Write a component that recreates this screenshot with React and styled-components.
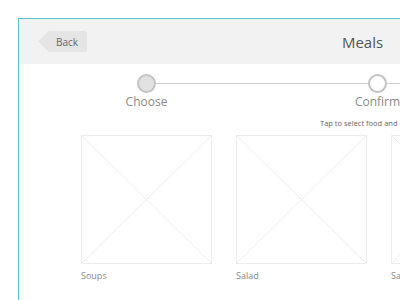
import styled, { createGlobalStyle } from "styled-components";

const GlobalStyle = createGlobalStyle`
  html, body {
    margin: 0;
    padding: 0;
    background: #fff;
    overflow: hidden;
  }
  body {
    font-family: "Open Sans", "Liberation Sans", sans-serif;
  }
`;

const steps = [
  { label: "Choose", done: true },
  { label: "Confirm", done: false },
  { label: "Pay", done: false },
];

const meals = ["Soups", "Salad", "Sandwiches"];

function Placeholder() {
  return (
    <Thumb>
      <svg width="100%" height="100%" viewBox="0 0 131 129" preserveAspectRatio="none">
        <line x1="0" y1="0" x2="131" y2="129" stroke="#ececec" strokeWidth="1" />
        <line x1="131" y1="0" x2="0" y2="129" stroke="#ececec" strokeWidth="1" />
      </svg>
    </Thumb>
  );
}

export default function App() {
  return (
    <>
      <GlobalStyle />
      <Frame>
        <Header>
          <BackButton>Back</BackButton>
          <Title>Meals</Title>
          <span />
        </Header>
        <Stepper>
          {steps.map((s, i) => (
            <Step key={s.label}>
              <Track>
                <Segment $hidden={i === 0} />
                <Dot $done={s.done} />
                <Segment $hidden={i === steps.length - 1} />
              </Track>
              <StepLabel>{s.label}</StepLabel>
            </Step>
          ))}
        </Stepper>
        <Hint>Tap to select food and drinks</Hint>
        <MealGrid>
          {meals.map((m) => (
            <MealCard key={m}>
              <Placeholder />
              <MealName>{m}</MealName>
            </MealCard>
          ))}
        </MealGrid>
      </Frame>
    </>
  );
}

const Frame = styled.div`
  margin: 18px 0 0 18px;
  width: 685px;
  height: 320px;
  border-top: 1.5px solid #52c6c6;
  border-left: 1.5px solid #52c6c6;
  background: #fff;
`;

const Header = styled.div`
  display: grid;
  grid-template-columns: 1fr auto 1fr;
  align-items: center;
  height: 45px;
  padding-left: 19px;
  background: #f2f2f2;
`;

const BackButton = styled.div`
  justify-self: start;
  width: 49px;
  height: 21px;
  box-sizing: border-box;
  padding-left: 18px;
  display: flex;
  align-items: center;
  font-size: 10px;
  color: #666;
  background: #e5e5e5;
  clip-path: polygon(11px 0, 100% 0, 100% 100%, 11px 100%, 0 50%);
  border-radius: 0 2px 2px 0;
`;

const Title = styled.div`
  font-size: 15px;
  color: #555;
  margin-left: -17px;
`;

const Stepper = styled.div`
  display: flex;
  padding-left: 12px;
  margin-top: 10px;
`;

const Step = styled.div`
  flex: 0 0 231px;
  display: flex;
  flex-direction: column;
  align-items: center;
`;

const Track = styled.div`
  width: 100%;
  display: flex;
  align-items: center;
`;

const Segment = styled.div`
  flex: 1;
  height: 1.5px;
  background: ${(p) => (p.$hidden ? "transparent" : "#cfcfcf")};
`;

const Dot = styled.div`
  width: 19px;
  height: 19px;
  box-sizing: border-box;
  border-radius: 50%;
  border: ${(p) => (p.$done ? "2px solid #c4c4c4" : "2.5px solid #c2c2c2")};
  background: ${(p) => (p.$done ? "#e2e2e2" : "#fff")};
`;

const StepLabel = styled.div`
  font-size: 12px;
  line-height: 16px;
  margin-top: 1px;
  color: #8a8a8a;
`;

const Hint = styled.div`
  margin: 8px 0 0 301px;
  font-size: 7.5px;
  line-height: 11px;
  color: #666;
  white-space: nowrap;
`;

const MealGrid = styled.div`
  display: grid;
  grid-template-columns: repeat(3, 131px);
  column-gap: 24px;
  padding-left: 62px;
  margin-top: 6px;
`;

const MealCard = styled.div`
  display: flex;
  flex-direction: column;
`;

const Thumb = styled.div`
  width: 131px;
  height: 129px;
  box-sizing: border-box;
  border: 1px solid #ececec;
  svg {
    display: block;
  }
`;

const MealName = styled.div`
  margin-top: 6px;
  font-size: 9px;
  line-height: 12px;
  color: #888;
`;
